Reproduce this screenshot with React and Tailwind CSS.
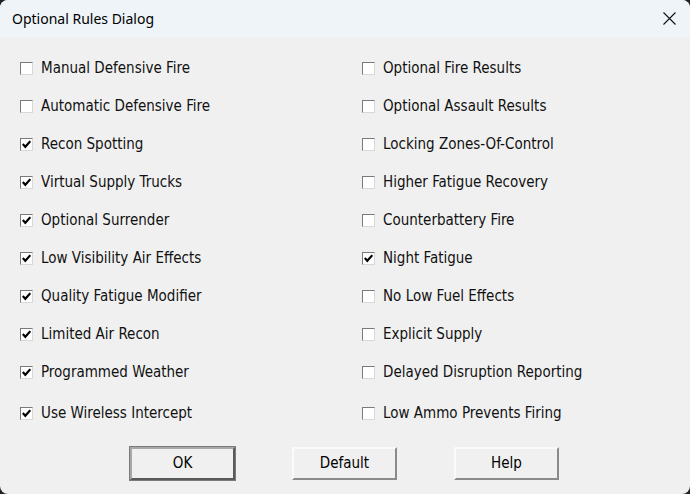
import React from "react";

const left = [
  ["Manual Defensive Fire", false],
  ["Automatic Defensive Fire", false],
  ["Recon Spotting", true],
  ["Virtual Supply Trucks", true],
  ["Optional Surrender", true],
  ["Low Visibility Air Effects", true],
  ["Quality Fatigue Modifier", true],
  ["Limited Air Recon", true],
  ["Programmed Weather", true],
  ["Use Wireless Intercept", true],
];
const right = [
  ["Optional Fire Results", false],
  ["Optional Assault Results", false],
  ["Locking Zones-Of-Control", false],
  ["Higher Fatigue Recovery", false],
  ["Counterbattery Fire", false],
  ["Night Fatigue", true],
  ["No Low Fuel Effects", false],
  ["Explicit Supply", false],
  ["Delayed Disruption Reporting", false],
  ["Low Ammo Prevents Firing", false],
];

function Box({ checked }) {
  return (
    <div className="w-[13px] h-[13px] bg-white border border-t-[#7a7a7a] border-l-[#7a7a7a] border-r-[#d8d8d8] border-b-[#d8d8d8] flex items-center justify-center shrink-0">
      {checked && (
        <svg width="9" height="9" viewBox="0 0 9 9">
          <path d="M0.8 4 L3.3 6.8 L8.3 1.2" fill="none" stroke="#000" strokeWidth="2.1" />
        </svg>
      )}
    </div>
  );
}

function Row({ label, checked, last }) {
  return (
    <div className={"flex items-center gap-[8px] " + (last ? "h-[41px] pt-[3px]" : "h-[38px]")}>
      <Box checked={checked} />
      <span className="text-[15px] text-[#111] leading-none">{label}</span>
    </div>
  );
}

function Btn({ children, def }) {
  return (
    <button
      className={
        "w-[105px] h-[33px] bg-[#f0f0f0] text-[15px] text-black " +
        (def
          ? "border-2 border-t-[#a8a8a8] border-l-[#a8a8a8] border-r-[#5a5a5a] border-b-[#5a5a5a] outline outline-1 outline-[#7a7a7a]"
          : "border-2 border-t-[#fafafa] border-l-[#fafafa] border-r-[#8a8a8a] border-b-[#8a8a8a]")
      }
    >
      {children}
    </button>
  );
}

export default function App() {
  return (
    <div className="w-[690px] h-[494px] bg-[#202124]" style={{ fontFamily: "Tahoma, 'DejaVu Sans Condensed', 'DejaVu Sans', sans-serif" }}>
      <div className="w-full h-full rounded-[8px] overflow-hidden flex flex-col bg-[#f0f0f0]">
        <div className="h-[37px] bg-[#eef4f8] flex items-center justify-between pl-[12px] pr-[14px] shrink-0">
          <span className="text-[14px] text-black" style={{ fontFamily: "'Noto Sans', 'Open Sans', sans-serif" }}>Optional Rules Dialog</span>
          <svg width="13" height="13" viewBox="0 0 13 13">
            <path d="M0.5 0.5 L12.5 12.5 M12.5 0.5 L0.5 12.5" stroke="#111" strokeWidth="1.1" />
          </svg>
        </div>
        <div className="flex pt-[12px]">
          <div className="flex flex-col pl-[20px] w-[362px]">
            {left.map(([l, c], i) => (
              <Row key={l} label={l} checked={c} last={i === left.length - 1} />
            ))}
          </div>
          <div className="flex flex-col">
            {right.map(([l, c], i) => (
              <Row key={l} label={l} checked={c} last={i === right.length - 1} />
            ))}
          </div>
        </div>
        <div className="flex pl-[130px] gap-[57px] mt-[15px]">
          <Btn def>OK</Btn>
          <Btn>Default</Btn>
          <Btn>Help</Btn>
        </div>
      </div>
    </div>
  );
}
